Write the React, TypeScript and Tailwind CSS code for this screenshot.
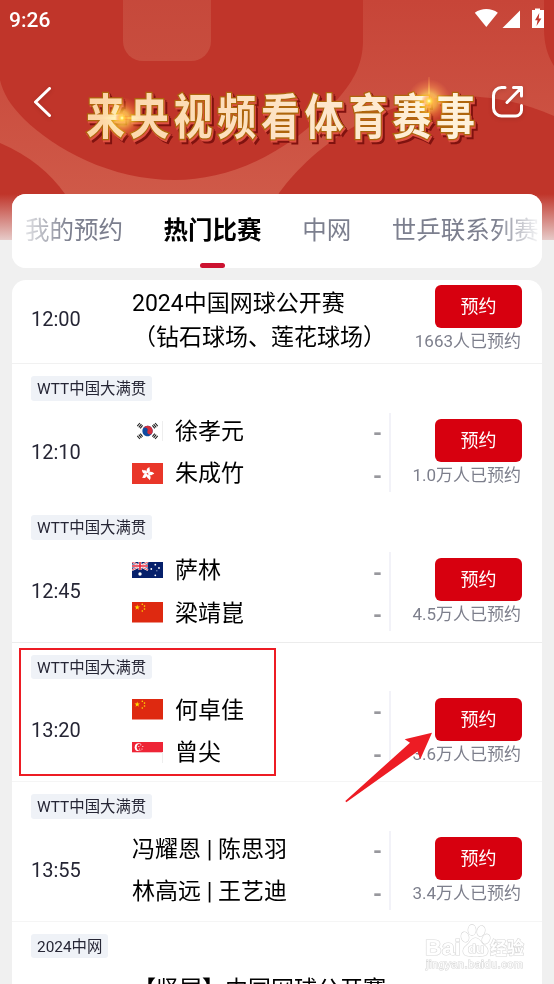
import React from 'react';

type Flag = 'kr' | 'hk' | 'au' | 'cn' | 'sg';

interface Player {
  name: string;
  flag?: Flag;
}

interface Match {
  time: string;
  tag: string;
  players: Player[];
  count: string;
  border: string;
}

const TABS = ['我的预约', '热门比赛', '中网', '世乒联系列赛'];

const MATCHES: Match[] = [
  {
    time: '12:10',
    tag: 'WTT中国大满贯',
    players: [{ name: '徐孝元', flag: 'kr' }, { name: '朱成竹', flag: 'hk' }],
    count: '1.0万人已预约',
    border: 'border-[#f1f1f1]',
  },
  {
    time: '12:45',
    tag: 'WTT中国大满贯',
    players: [{ name: '萨林', flag: 'au' }, { name: '梁靖崑', flag: 'cn' }],
    count: '4.5万人已预约',
    border: 'border-transparent',
  },
  {
    time: '13:20',
    tag: 'WTT中国大满贯',
    players: [{ name: '何卓佳', flag: 'cn' }, { name: '曾尖', flag: 'sg' }],
    count: '3.6万人已预约',
    border: 'border-[#ececec]',
  },
  {
    time: '13:55',
    tag: 'WTT中国大满贯',
    players: [{ name: '冯耀恩 | 陈思羽' }, { name: '林高远 | 王艺迪' }],
    count: '3.4万人已预约',
    border: 'border-[#f5f5f5]',
  },
];

const STAR = '0,-1 .225,-.309 .951,-.309 .363,.118 .588,.809 0,.382 -.588,.809 -.363,.118 -.951,-.309 -.225,-.309';

function FlagIcon({ code }: { code: Flag }) {
  if (code === 'kr') {
    return (
      <svg viewBox="0 0 31 20" className="w-[31px] h-5">
        <rect width="31" height="20" fill="#fff" />
        <path d="M30.5 0v20" stroke="#eee" />
        <g transform="rotate(20 15.5 10)">
          <circle cx="15.5" cy="10" r="5.2" fill="#0f4ba0" />
          <path d="M10.3 10a5.2 5.2 0 0 1 10.4 0 2.6 2.6 0 0 1-5.2 0 2.6 2.6 0 0 0-5.2 0z" fill="#d22f3c" />
        </g>
        <g stroke="#222" strokeWidth="1.1">
          <path d="M5.3 5.2 7.9 2M6.8 6.3 9.4 3.1M8.2 7.4l2.4-3.1M5.3 14.8 7.9 18M6.8 13.7l2.6 3.2M8.2 12.6l2.4 3.1" />
          <path d="M25.7 5.2 23.1 2M24.2 6.3l-2.6-3.2M22.8 7.4l-2.4-3.1M25.7 14.8 23.1 18M24.2 13.7l-2.6 3.2M22.8 12.6l-2.4 3.1" />
        </g>
      </svg>
    );
  }
  if (code === 'hk') {
    return (
      <svg viewBox="0 0 31 21" className="w-[31px] h-[21px]">
        <rect width="31" height="21" fill="#e93629" />
        {[15, 87, 159, 231, 303].map((a) => (
          <path
            key={a}
            transform={`rotate(${a} 15.5 10.7)`}
            d="M15.5 10.2c-2.6-1.2-2.4-5 .6-6.3-.6 1.8 2 2.9.8 5.1-.4.7-.9 1-1.4 1.2z"
            fill="#fff"
          />
        ))}
      </svg>
    );
  }
  if (code === 'au') {
    return (
      <svg viewBox="0 0 31 16" className="w-[31px] h-4">
        <rect width="31" height="16" fill="#06206b" />
        <path d="M0 0 16 8M16 0 0 8" stroke="#fff" strokeWidth="2" />
        <path d="M0 0 16 8M16 0 0 8" stroke="#e4283c" strokeWidth=".8" />
        <path d="M8 0v8M0 4h16" stroke="#fff" strokeWidth="3" />
        <path d="M8 0v8M0 4h16" stroke="#e4283c" strokeWidth="1.7" />
        <g fill="#fff">
          <circle cx="8" cy="12" r="1.7" />
          <circle cx="23.3" cy="2.7" r=".9" />
          <circle cx="19.3" cy="7" r=".9" />
          <circle cx="27" cy="6" r=".9" />
          <circle cx="24.9" cy="8.8" r=".5" />
          <circle cx="23.3" cy="13.3" r=".9" />
        </g>
      </svg>
    );
  }
  if (code === 'cn') {
    return (
      <svg viewBox="0 0 31 20.5" className="w-[31px] h-[20.5px]">
        <rect width="31" height="20.5" fill="#de2910" />
        <g fill="#ffde00">
          <polygon points={STAR} transform="translate(5.2 5.4) scale(2.9)" />
          <circle cx="10.3" cy="2.2" r=".8" />
          <circle cx="12.5" cy="4.1" r=".8" />
          <circle cx="12.5" cy="7" r=".8" />
          <circle cx="10.3" cy="9" r=".8" />
        </g>
      </svg>
    );
  }
  return (
    <svg viewBox="0 0 31 21" className="w-[31px] h-[21px]">
      <rect width="31" height="21" fill="#fff" />
      <rect width="31" height="10.3" fill="#ee2536" />
      <path d="M30.5 10v11" stroke="#eee" />
      <circle cx="6.6" cy="5.2" r="3.9" fill="#fff" />
      <circle cx="8.2" cy="5.2" r="3.5" fill="#ee2536" />
      <g fill="#fff">
        <circle cx="8.8" cy="2.8" r=".6" />
        <circle cx="6.8" cy="4.5" r=".6" />
        <circle cx="10.8" cy="4.5" r=".6" />
        <circle cx="7.6" cy="7" r=".6" />
        <circle cx="10" cy="7" r=".6" />
      </g>
    </svg>
  );
}

function HeaderBackground() {
  return (
    <svg viewBox="0 0 554 240" className="absolute left-0 top-0 w-[554px] h-[240px]">
      <defs>
        <linearGradient id="light" x1="0" y1="0" x2="0" y2="1">
          <stop offset="0" stopColor="#c74538" />
          <stop offset=".8" stopColor="#cf5948" />
        </linearGradient>
        <linearGradient id="tile" x1="0" y1="0" x2="0" y2="1">
          <stop offset="0" stopColor="#c5473a" />
          <stop offset="1" stopColor="#c84d3e" />
        </linearGradient>
        <linearGradient id="fade" x1="0" y1="0" x2="0" y2="1">
          <stop offset="0" stopColor="#f0f0f0" stopOpacity="0" />
          <stop offset="1" stopColor="#f0f0f0" stopOpacity=".8" />
        </linearGradient>
      </defs>
      <rect width="554" height="240" fill="url(#light)" />
      <g fill="#c0352a">
        <path d="M0 0H363V40C363 66 352 83 335 102C288 154 229 180 175 180C110 180 55 149 24 119C10 105 3 93 0 80z" />
        <path d="M0 143C30 156 50 173 65 194V240H0z" />
        <path d="M279 193C315 144 382 97 463 96C500 97 525 104 554 116V240H260z" />
        <path d="M544 0H554V66C547 55 544 43 544 28z" />
      </g>
      <rect x="123" y="-27" width="88" height="88" rx="20" fill="url(#tile)" />
      <rect y="194" width="554" height="46" fill="url(#fade)" />
    </svg>
  );
}

function BannerTitle() {
  return (
    <svg viewBox="0 0 410 74" className="w-[410px] h-[74px] shrink-0">
      <defs>
        <linearGradient id="gold" x1="0" y1="0" x2="1" y2="0">
          <stop offset="0" stopColor="#fcd5a5" />
          <stop offset=".5" stopColor="#fde3c6" />
          <stop offset="1" stopColor="#fff2dc" />
        </linearGradient>
        <radialGradient id="spark">
          <stop offset="0" stopColor="#fff" />
          <stop offset=".14" stopColor="#fff27a" />
          <stop offset=".35" stopColor="#ffc02a" stopOpacity=".75" />
          <stop offset=".65" stopColor="#ff7a1c" stopOpacity=".4" />
          <stop offset="1" stopColor="#ff5a10" stopOpacity="0" />
        </radialGradient>
      </defs>
      <g className="[filter:drop-shadow(1px_2px_0_#df5143)_drop-shadow(2px_2px_0_#80120f)]">
        <text
          x="0"
          y="0"
          transform="translate(6 57) scale(1 1.22)"
          fontSize="39"
          textLength="389"
          fill="url(#gold)"
          stroke="#ae650c"
          strokeWidth="2.2"
          paintOrder="stroke"
          className="font-bold font-['Noto_Sans_CJK_SC',sans-serif]"
        >
          来央视频看体育赛事
        </text>
      </g>
      <g className="mix-blend-screen">
        <circle cx="42" cy="41" r="21" fill="url(#spark)" />
        <ellipse cx="42" cy="41" rx="27" ry="2.5" fill="url(#spark)" />
        <circle cx="349" cy="24" r="22" fill="url(#spark)" />
        <ellipse cx="349" cy="22" rx="1.6" ry="28" fill="url(#spark)" />
      </g>
      <circle cx="42" cy="41" r="7" fill="url(#spark)" />
      <circle cx="349" cy="24" r="8" fill="url(#spark)" />
    </svg>
  );
}

function StatusBar() {
  return (
    <div className="relative flex h-[38px] items-center justify-between pl-[9px] pr-[10px] text-white">
      <span className="mt-0.5 text-[21px] font-medium leading-none">9:26</span>
      <svg viewBox="0 0 70 20" className="mt-[-2px] h-5 w-[70px]" fill="#fff">
        <path d="M.8 4.8C7.5-.2 17.2-.2 23.8 4.8L12.3 19z" />
        <path d="M46 2.5V20H28.500z" />
        <path d="M61 .5h5V2h4v18H58V2h3z" />
        <path d="M65.3 5 61 12.3h2.6L62.5 18l4.9-7.6h-2.7z" fill="#c0352b" />
      </svg>
    </div>
  );
}

function BookButton({ count }: { count: string }) {
  return (
    <div className="flex flex-col items-end">
      <button className="h-[43px] w-[87px] rounded-md bg-[#d7000f] text-[18px] leading-[43px] text-white">预约</button>
      <span className="mt-px mr-px whitespace-nowrap text-[17px] leading-6 text-[#7d7f8c]">{count}</span>
    </div>
  );
}

function Tag({ label }: { label: string }) {
  return (
    <span className="block h-[24.5px] w-fit rounded-[3px] bg-[#eff2f7] px-[6px] text-[15.4px] leading-[27px] text-[#262635]">
      {label}
    </span>
  );
}

function MatchRow({ match }: { match: Match }) {
  return (
    <div className={`h-[139.4px] border-t pl-[19px] pr-5 pt-3 ${match.border}`}>
      <Tag label={match.tag} />
      <div className="mt-[12px] flex h-[79px]">
        <div className="w-[101px] text-[20px] leading-[79px] text-[#262635]">{match.time}</div>
        <div className="-mt-[3px] flex-1">
          {match.players.map((p) => (
            <div key={p.name} className="flex h-[42.5px] items-center">
              {p.flag && (
                <span className="mr-[12px] flex w-[31px] items-center">
                  <FlagIcon code={p.flag} />
                </span>
              )}
              <span className="mt-px whitespace-nowrap text-[23px] leading-none text-black">{p.name}</span>
              <span className="ml-auto mr-[7px] mt-1.5 text-[23px] font-bold leading-none text-[#98989d]">-</span>
            </div>
          ))}
        </div>
        <div className="flex w-[133px] justify-end border-l-2 border-[#f2f2f8] pt-[6.5px]">
          <BookButton count={match.count} />
        </div>
      </div>
    </div>
  );
}

function Watermark() {
  return (
    <svg viewBox="0 0 110 54" className="absolute left-[420px] top-[920px] h-[54px] w-[110px]">
      <g fill="#fff" stroke="#d8d8d8" strokeWidth="1.2" paintOrder="stroke" className="font-['Liberation_Sans','Noto_Sans_CJK_SC',sans-serif] font-bold">
        <ellipse cx="45" cy="17" rx="3.7" ry="5" transform="rotate(-15 45 17)" />
        <ellipse cx="52" cy="10" rx="3.8" ry="5.3" />
        <ellipse cx="61" cy="11" rx="3.8" ry="5.3" transform="rotate(15 61 11)" />
        <ellipse cx="66" cy="19" rx="3.7" ry="5" transform="rotate(25 66 19)" />
        <path d="M55.5 18c-4 0-5 4-8 6.5-4 3.5-5 5-4 8.5 1.2 3.6 6 3 12 3s10.8.6 12-3c1-3.5 0-5-4-8.5-3-2.5-4-6.5-8-6.5z" />
        <text x="5" y="35" fontSize="22" textLength="36" lengthAdjust="spacingAndGlyphs">Bai</text>
        <text x="48" y="33" fontSize="13">du</text>
        <text x="70" y="34" fontSize="17" textLength="34">经验</text>
        <text x="6" y="48" fontSize="11" textLength="97" className="font-normal">jingyan.baidu.com</text>
      </g>
    </svg>
  );
}

export default function App() {
  return (
    <div className="relative h-[984px] w-[554px] overflow-hidden bg-[#f0f0f0] font-[Roboto,'Noto_Sans_CJK_SC',sans-serif]">
      <HeaderBackground />
      <StatusBar />

      <header className="relative flex h-[156px] pl-[32px]">
        <svg viewBox="0 0 22 34" className="mt-[47px] h-[34px] w-[22px] shrink-0 drop-shadow-sm" fill="none" stroke="#fff" strokeWidth="3" strokeLinecap="round" strokeLinejoin="round">
          <path d="M17.5 3.5 3.5 17l14 13.5" />
        </svg>
        <div className="ml-[26px] mt-[39px]">
          <BannerTitle />
        </div>
        <svg viewBox="0 0 34 34" className="ml-px mt-[47px] h-[34px] w-[34px] shrink-0 drop-shadow-sm" fill="none" stroke="#fff" strokeWidth="3" strokeLinecap="round" strokeLinejoin="round">
          <path d="M14 2.500h-3.500a8 8 0 0 0-8 8v12.500a8 8 0 0 0 8 8h13.500a6 6 0 0 0 6.500-6.500v-4M22.500 2.500H30.500V11M30.500 2.500 16 17.500" />
        </svg>
      </header>

      <nav className="relative mx-3 flex h-[74px] gap-[40.6px] overflow-hidden rounded-[14px] bg-white pl-[13px]">
        {TABS.map((tab, i) => (
          <div
            key={tab}
            className={
              i === 1
                ? 'flex shrink-0 flex-col items-center whitespace-nowrap text-[24.5px] font-bold leading-[73px] text-black'
                : 'shrink-0 whitespace-nowrap text-[24.5px] leading-[73px] text-[#7c7f8e]'
            }
          >
            {tab}
            {i === 1 && <span className="-mt-[4px] h-[4.5px] w-[25px] shrink-0 rounded-full bg-[#cc1230]" />}
          </div>
        ))}
        <div className="absolute left-0 top-0 h-full w-[58px] bg-linear-to-r from-white to-transparent" />
        <div className="absolute right-0 top-0 h-full w-[48px] bg-linear-to-l from-white to-transparent" />
      </nav>

      <main className="mx-3 mt-3 rounded-t-[14px] bg-white">
        <div className="flex h-[83px] pl-[19px] pr-5 pt-[5px]">
          <div className="w-[101px] text-[20px] leading-[68px] text-[#262635]">12:00</div>
          <div className="flex-1 whitespace-nowrap text-[23px] leading-[34px] text-black">
            <div className="mt-[2px]">2024中国网球公开赛</div>
            <div className="pl-px">（钻石球场、莲花球场）</div>
          </div>
          <BookButton count="1663人已预约" />
        </div>

        {MATCHES.map((m) => (
          <MatchRow key={m.time} match={m} />
        ))}

        <div className="border-t border-[#f5f5f5] pl-[19px] pt-3">
          <Tag label="2024中网" />
          <div className="ml-[102px] mt-[15px] whitespace-nowrap text-[23px] leading-[34px] text-black">【竖屏】中国网球公开赛</div>
        </div>
      </main>

      <Watermark />

      {/* highlight box and pointer */}
      <div className="absolute left-[19px] top-[648px] h-[128px] w-[257px] border-2 border-[#ed1c24]" />
      <svg viewBox="0 0 90 72" className="absolute left-[344px] top-[732px] h-[72px] w-[90px]">
        <path d="M1.3 69 66 10.7 60.7 7.3 88 .8 76.3 27.3 73.5 19.5 2.3 70.2z" fill="#ed1c24" />
      </svg>
    </div>
  );
}
